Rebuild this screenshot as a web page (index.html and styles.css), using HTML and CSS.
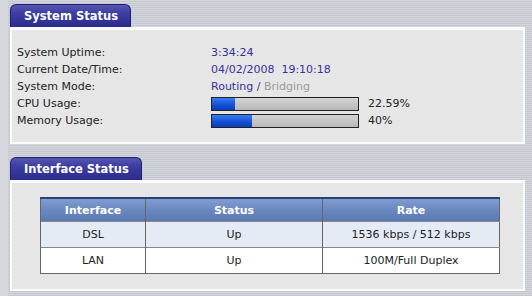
FILE: index.html
```html
<!DOCTYPE html>
<html lang="en">
<head>
    <meta charset="UTF-8">
    <title>Status</title>
    <link rel="stylesheet" href="styles.css">
</head>
<body>

<div class="page">
    <div class="box">
        <div class="tab">System Status</div>
        <div class="panel">
            <table class="info">
                <tr>
                    <td class="label">System Uptime:</td>
                    <td class="value">3:34:24</td>
                </tr>
                <tr>
                    <td class="label">Current Date/Time:</td>
                    <td class="value">04/02/2008&nbsp;&nbsp;19:10:18</td>
                </tr>
                <tr>
                    <td class="label">System Mode:</td>
                    <td class="value">Routing / <span class="off">Bridging</span></td>
                </tr>
                <tr>
                    <td class="label">CPU Usage:</td>
                    <td class="value">
                        <div class="usage">
                            <div class="bar"><div class="fill" style="width: 23px"></div></div>
                            <span class="pct">22.59%</span>
                        </div>
                    </td>
                </tr>
                <tr>
                    <td class="label">Memory Usage:</td>
                    <td class="value">
                        <div class="usage">
                            <div class="bar"><div class="fill" style="width: 40px"></div></div>
                            <span class="pct">40%</span>
                        </div>
                    </td>
                </tr>
            </table>
        </div>
    </div>

    <div class="box">
        <div class="tab">Interface Status</div>
        <div class="panel panel-table">
            <table class="grid">
                <thead>
                    <tr>
                        <th class="c1">Interface</th>
                        <th class="c2">Status</th>
                        <th>Rate</th>
                    </tr>
                </thead>
                <tbody>
                    <tr class="odd">
                        <td>DSL</td>
                        <td>Up</td>
                        <td>1536 kbps / 512 kbps</td>
                    </tr>
                    <tr>
                        <td>LAN</td>
                        <td>Up</td>
                        <td>100M/Full Duplex</td>
                    </tr>
                </tbody>
            </table>
        </div>
    </div>
</div>

</body>
</html>
```

FILE: styles.css
```css
html, body {
    margin: 0;
    padding: 0;
    height: 100%;
}

body {
    font-family: "DejaVu Sans", Verdana, sans-serif;
    font-size: 11px;
    color: #222;
    background-color: #ccd0d8;
    background-image:
        linear-gradient(to right, #d6d7dd 0, #d6d7dd 8px, transparent 8px),
        repeating-linear-gradient(to bottom, #d3d5da 0, #d3d5da 1px, #c4c8d0 1px, #c4c8d0 2px);
}

.page {
    padding: 4px 7px 0 10px;
}

.box {
    margin-bottom: 13px;
}

.tab {
    display: inline-block;
    vertical-align: bottom;
    height: 23px;
    line-height: 23px;
    padding: 0 12px 0 13px;
    box-sizing: border-box;
    color: white;
    font-weight: bold;
    font-size: 11.5px;
    border-radius: 6px 6px 0 0;
    background: linear-gradient(to bottom, #5656b0 0, #3c3ca2 40%, #2c2c8c 100%);
    border: 1px solid #1e1e6e;
    border-bottom: none;
}

.panel {
    background-color: #e6e6e6;
    border: 2px solid #fbfbfb;
    border-top-width: 3px;
    padding: 14px 5px 13px 5px;
}

.info {
    border-collapse: collapse;
}

.info td {
    padding: 0;
    height: 17px;
    vertical-align: middle;
}

.info .label {
    width: 194px;
}

.info .value {
    color: #333399;
}

.off {
    color: #9a9a9a;
}

.usage {
    display: flex;
    align-items: center;
}

.bar {
    width: 146px;
    height: 12px;
    border: 1px solid #222;
    background: linear-gradient(to bottom, #d4d4d4, #b8b8b8);
}

.fill {
    height: 100%;
    background: linear-gradient(to bottom, #3a7ef0 0, #1656d8 50%, #0a3cb8 100%);
}

.pct {
    color: #222;
    margin-left: 9px;
}

.panel-table {
    padding: 14px 23px 15px 28px;
}

.grid {
    width: 460px;
    border-collapse: collapse;
    border: 1px solid #666;
}

.grid th {
    height: 22px;
    color: white;
    font-weight: bold;
    font-size: 11px;
    background: linear-gradient(to bottom, #7f9dd0 0, #6a88c0 50%, #5a78b2 100%);
    border-top: 2px solid #2a3e7a;
    border-left: 1px solid #666;
    padding: 0;
}

.grid td {
    height: 25px;
    text-align: center;
    border-left: 1px solid #666;
    border-top: 1px solid #888;
    background-color: white;
    padding: 0;
}

.grid tr.odd td {
    background-color: #e4ebf5;
}

.grid .c1 {
    width: 104px;
}

.grid .c2 {
    width: 176px;
}
```
